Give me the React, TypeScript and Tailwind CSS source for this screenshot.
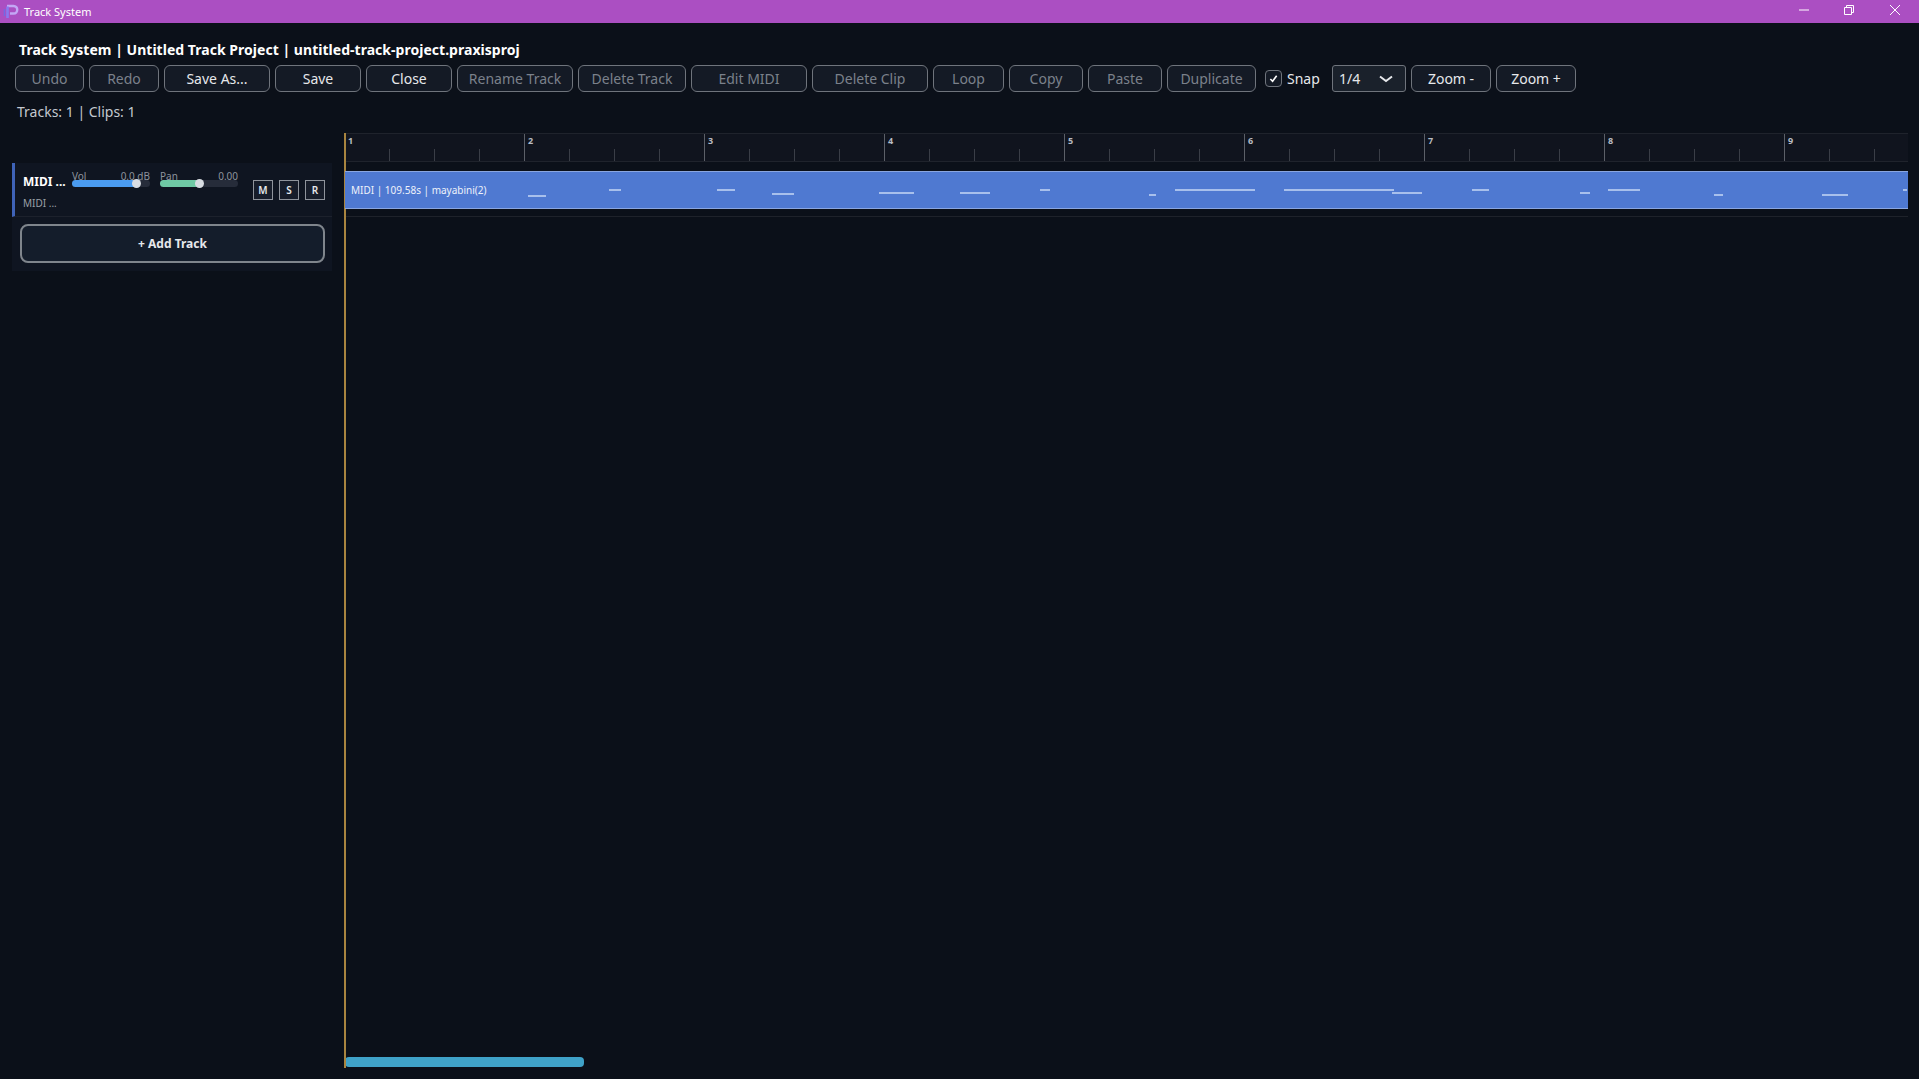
const font = "font-['Noto_Sans',sans-serif]";

const buttons = [
  { label: "Undo", w: "w-[69px]", on: false },
  { label: "Redo", w: "w-[70px]", on: false },
  { label: "Save As...", w: "w-[106px]", on: true },
  { label: "Save", w: "w-[86px]", on: true },
  { label: "Close", w: "w-[86px]", on: true },
  { label: "Rename Track", w: "w-[116px]", on: false },
  { label: "Delete Track", w: "w-[108px]", on: false },
  { label: "Edit MIDI", w: "w-[116px]", on: false },
  { label: "Delete Clip", w: "w-[116px]", on: false },
  { label: "Loop", w: "w-[71px]", on: false },
  { label: "Copy", w: "w-[74px]", on: false },
  { label: "Paste", w: "w-[74px]", on: false },
  { label: "Duplicate", w: "w-[89px]", on: false },
];

// [x, width, y] relative to the clip
const notes = [
  [184, 18, 23], [265, 12, 17], [373, 18, 17], [428, 22, 21], [535, 35, 20],
  [616, 30, 20], [696, 10, 17], [805, 7, 22], [831, 80, 17], [940, 110, 17],
  [1048, 30, 20], [1128, 17, 17], [1236, 10, 20], [1264, 32, 17], [1370, 9, 22],
  [1478, 26, 22], [1559, 4, 17],
];

function ToolButton({ label, w, on }: { label: string; w: string; on: boolean }) {
  return (
    <button
      className={`h-[27px] ${w} rounded-[6px] border border-[#6f747c] bg-[#141a25] text-[14px] leading-none ${on ? "text-[#e6e8eb]" : "text-[#7b818b]"}`}
    >
      {label}
    </button>
  );
}

function Slider({ label, value, fill, color, knob, mr }: { label: string; value: string; fill: string; color: string; knob: string; mr?: string }) {
  return (
    <div className={`w-[78px] ${mr ?? ""}`}>
      <div className="flex h-[7px] items-center justify-between text-[10px] leading-none text-[#8d939c]">
        <span>{label}</span>
        <span>{value}</span>
      </div>
      <div className="relative mt-[1px] h-[7px] rounded-full bg-[#262c3a]">
        <div className={`h-full rounded-full ${fill} ${color}`} />
        <div className={`absolute top-[-1px] h-[9px] w-[9px] rounded-full bg-[#d8dce2] ${knob}`} />
      </div>
    </div>
  );
}

function TrackButton({ label }: { label: string }) {
  return (
    <div className="flex h-[20px] w-[20px] items-center justify-center border border-[#8f949c] bg-[#171d2a] text-[10px] font-semibold text-[#e6e8eb]">
      {label}
    </div>
  );
}

function Ruler() {
  return (
    <div className="flex h-[29px] overflow-hidden border-y border-y-[#1f232c] bg-[#10141e]">
      {Array.from({ length: 9 }, (_, i) => (
        <div key={i} className="flex w-[180px] shrink-0 flex-col">
          <div className="flex h-[27px] flex-col border-l border-[#5c6068] pl-[3px] pt-[1px]">
            <span className="text-[9px] font-bold leading-[12px] text-[#b9bdc4]">{i + 1}</span>
            <div className="mt-auto ml-[-4px] flex">
              {[0, 1, 2, 3].map((b) => (
                <div key={b} className="h-[12px] w-[45px]">
                  {b > 0 && <div className="h-full w-px bg-[#3a3e47]" />}
                </div>
              ))}
            </div>
          </div>
        </div>
      ))}
    </div>
  );
}

export default function App() {
  return (
    <div className={`flex h-[1079px] w-[1919px] flex-col overflow-hidden bg-[#0b1019] ${font}`}>
      <div className="flex h-[23px] shrink-0 items-center bg-[#ab4fc2] pl-[3px] text-white">
        <svg width="16" height="16" viewBox="0 0 16 16" fill="none">
          <path d="M4 2h6.500c5 0 5 7.500 0 7.500H7" stroke="#c3a6f5" strokeWidth="2.400" />
          <path d="M4.500 2.500V14" stroke="#8a78ee" strokeWidth="2.600" />
          <path d="M1.500 5v7" stroke="#7468e4" strokeWidth="1.500" />
        </svg>
        <span className="ml-[5px] text-[11px] leading-none">Track System</span>
        <div className="mb-[3px] ml-auto flex items-center">
          <svg width="10" height="10" viewBox="0 0 10 10" className="mr-[35px]">
            <path d="M0 5h10" stroke="#fff" strokeWidth="1" />
          </svg>
          <svg width="10" height="10" viewBox="0 0 10 10" fill="none" className="mr-[36px]">
            <path d="M.5 2.500h7v7h-7zM2.500 2.500V.5h7v7h-2" stroke="#fff" strokeWidth="1" />
          </svg>
          <svg width="10" height="10" viewBox="0 0 10 10" className="mr-[19px]">
            <path d="M0 0l10 10M10 0L0 10" stroke="#fff" strokeWidth="1" />
          </svg>
        </div>
      </div>

      <div className="shrink-0 pl-[19px] pt-[17px] text-[14px] font-bold leading-[20px] tracking-[0.03px] text-white">
        Track System | Untitled Track Project | untitled-track-project.praxisproj
      </div>

      <div className="mt-[5px] flex shrink-0 items-center gap-[5px] pl-[15px]">
        {buttons.map((b) => (
          <ToolButton key={b.label} {...b} />
        ))}
        <div className="ml-[4px] flex h-[17px] w-[17px] items-center justify-center rounded-[4px] border border-[#6f747c] bg-[#141a25]">
          <svg width="9" height="9" viewBox="0 0 10 10" fill="none">
            <path d="M1.500 5.500L4 8l4.500-6" stroke="#fff" strokeWidth="1.800" />
          </svg>
        </div>
        <span className="w-[40px] text-[14px] leading-none text-[#e6e8eb]">Snap</span>
        <div className="flex h-[27px] w-[74px] items-center justify-between rounded-[3px] border border-[#6f747c] bg-[#1a212b] pl-[6px] pr-[12px] text-[14px] text-[#e6e8eb]">
          1/4
          <svg width="14" height="8" viewBox="0 0 14 8" fill="none">
            <path d="M1 1.500L7 6l6-4.500" stroke="#e6e8eb" strokeWidth="2" />
          </svg>
        </div>
        <ToolButton label="Zoom -" w="w-[80px]" on />
        <ToolButton label="Zoom +" w="w-[80px]" on />
      </div>

      <div className="mt-[11px] h-[18px] shrink-0 pl-[17px] text-[14px] leading-[18px] text-[#c4c9d0]">Tracks: 1 | Clips: 1</div>

      <div className="mt-[12px] flex min-h-0 flex-1">
        <div className="ml-[12px] w-[320px] shrink-0 pt-[30px]">
          <div className="bg-[#0f1521]">
            <div className="flex h-[54px] items-start border-b border-[#1c212c] border-l-[3px] border-l-[#3f63b8] pl-[8px]">
              <div className="w-[49px] shrink-0 pt-[10px]">
                <div className="text-[12px] font-bold leading-[18px] text-white">MIDI ...</div>
                <div className="mt-[5px] text-[10px] leading-[14px] text-[#9aa0a8]">MIDI ...</div>
              </div>
              <div className="flex pt-[9px]">
                <Slider label="Vol" value="0.0 dB" fill="w-[65px]" color="bg-[#4a9bf0]" knob="left-[60px]" mr="mr-[10px]" />
                <Slider label="Pan" value="0.00" fill="w-[39px]" color="bg-[#6fc9a5]" knob="left-[35px]" />
              </div>
              <div className="ml-[15px] flex gap-[6px] pt-[17px]">
                <TrackButton label="M" />
                <TrackButton label="S" />
                <TrackButton label="R" />
              </div>
            </div>
            <div className="pb-[8px] pl-[8px] pt-[7px]">
              <button className="flex h-[39px] w-[305px] items-center justify-center rounded-[8px] border-2 border-[#7f858c] bg-[#141d2b] text-[12px] font-bold text-[#e6e8eb]">
                + Add Track
              </button>
            </div>
          </div>
        </div>

        <div className="relative ml-[12px] flex w-[1564px] shrink-0 flex-col">
          <Ruler />
          <div className="border-b border-[#1e222a] pb-[7px] pl-px pt-[9px]">
            <div className="relative z-10 h-[38px] overflow-hidden border-y border-[#8aa6e0] bg-[#4f79d1] pl-[6px] text-[10px] leading-[36px] text-[#eef2fa]">
              MIDI | 109.58s | mayabini(2)
              <svg className="absolute left-[-1px] top-0" width="1564" height="38">
                {notes.map(([x, w, y]) => (
                  <rect key={x} x={x} y={y} width={w} height="2" fill="#a8c0ec" />
                ))}
              </svg>
            </div>
          </div>
          <div className="ml-px mt-auto mb-[12px] h-[10px] w-[239px] rounded-[4px] bg-[#3fa2c8]" />
          <div className="absolute bottom-[11px] left-0 top-0 w-[2px] bg-[#a8843f]" />
        </div>
      </div>
    </div>
  );
}
